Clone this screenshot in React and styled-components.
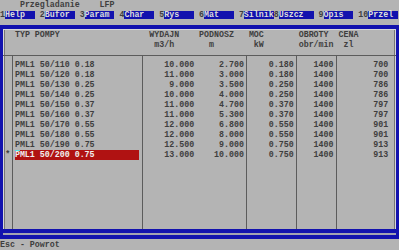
import styled, { createGlobalStyle } from "styled-components";

const GlobalStyle = createGlobalStyle`
  html, body {
    margin: 0;
    padding: 0;
    background: #b4b4b4;
  }
  body {
    overflow: hidden;
  }
`;

const Screen = styled.div`
  width: 399px;
  height: 250px;
  background: #b4b4b4;
  color: #3e3e3e;
  font-family: "Liberation Mono", "DejaVu Sans Mono", monospace;
  font-size: 8.3125px;
  font-weight: bold;
  line-height: 10px;
  white-space: pre;
  overflow: hidden;
`;

const TitleBar = styled.div`
  height: 10px;
  padding-left: 4ch;
`;

const KeyBar = styled.div`
  display: flex;
  height: 10px;
`;

const Key = styled.div`
  display: flex;
  margin-right: ${(p) => p.$gap}ch;
`;

const KeyLabel = styled.span`
  width: ${(p) => p.$cols}ch;
  height: 10px;
  background: linear-gradient(to bottom, transparent 1px, #1212ae 1px, #1212ae 9px, transparent 9px);
  color: #dcdcdc;
`;

const Frame = styled.div`
  margin-top: 5px;
  height: 214px;
  box-sizing: border-box;
  padding: 4px 3px;
  background: #1212ae;
  display: flex;
  flex-direction: column;
`;

const Inner = styled.div`
  height: 200px;
  box-sizing: border-box;
  padding-top: 1px;
  background: #b4b4b4;
  box-shadow: inset 1px 1px 0 #d8d8d8, inset -1px 0 0 #d8d8d8, inset 2px 0 0 #767676,
    inset -2px 0 0 #767676;
`;

const Groove = styled.div`
  margin-top: 4px;
  height: 2px;
  background: #a2a2b2;
`;

const Table = styled.div`
  display: flex;
  height: 100%;
`;

const Col = styled.div`
  display: flex;
  flex-direction: column;
  width: ${(p) => p.$w};
  flex: ${(p) => (p.$grow ? 1 : "none")};
`;

const HeadCell = styled.div`
  height: 10px;
  padding-left: ${(p) => p.$at || 0}ch;
`;

const Body = styled.div`
  flex: 1;
  margin-top: 5px;
  padding-top: 5px;
  box-shadow: inset 0 1px 0 #5c5c5c${(p) => (p.$sep ? ", inset 1px 0 0 #5c5c5c" : "")};
`;

const Mark = styled.div`
  height: 10px;
  text-align: center;
`;

const Value = styled.div`
  height: 10px;
  width: ${(p) => p.$end}ch;
  text-align: right;
`;

const Name = styled.div`
  height: 10px;
  padding-left: 0.5ch;
`;

const Picked = styled.div`
  width: 25ch;
  height: 10px;
  margin-left: 0.5ch;
  background: #b01212;
  color: #f0f0f0;
`;

const Caret = styled.span`
  display: inline-block;
  width: 1ch;
  height: 10px;
  vertical-align: top;
  box-shadow: inset 0 1px 0 #4ee0e0;
`;

const Footer = styled.div`
  margin-top: 1px;
  height: 10px;
`;

const keys = [
  { n: "1", label: "Help", cols: 6, gap: 1 },
  { n: "2", label: "Bufor", cols: 6, gap: 1 },
  { n: "3", label: "Param", cols: 6, gap: 1 },
  { n: "4", label: "Char", cols: 6, gap: 1 },
  { n: "5", label: "Rys", cols: 6, gap: 1 },
  { n: "6", label: "Mat", cols: 6, gap: 1 },
  { n: "7", label: "Silnik", cols: 6, gap: 0 },
  { n: "8", label: "Uszcz", cols: 7, gap: 1 },
  { n: "9", label: "Opis", cols: 6, gap: 1 },
  { n: "10", label: "Przel", cols: 6, gap: 0 },
];

const pumps = [
  ["PML1 50/110 0.18", "10.000", "2.700", "0.180", "1400", "700"],
  ["PML1 50/120 0.18", "11.000", "3.000", "0.180", "1400", "700"],
  ["PML1 50/130 0.25", "9.000", "3.500", "0.250", "1400", "786"],
  ["PML1 50/140 0.25", "10.000", "4.000", "0.250", "1400", "786"],
  ["PML1 50/150 0.37", "11.000", "4.700", "0.370", "1400", "797"],
  ["PML1 50/160 0.37", "11.000", "5.300", "0.370", "1400", "797"],
  ["PML1 50/170 0.55", "12.000", "6.800", "0.550", "1400", "901"],
  ["PML1 50/180 0.55", "12.000", "8.000", "0.550", "1400", "901"],
  ["PML1 50/190 0.75", "12.500", "9.000", "0.750", "1400", "913"],
  ["PML1 50/200 0.75", "13.000", "10.000", "0.750", "1400", "913"],
];

const selected = 9;

// numeric columns: field index, width, separator, header offsets, value end
const numCols = [
  { i: 1, w: "10.5ch", sep: true, head: "WYDAJN", headAt: 1.5, unit: "m3/h", unitAt: 2.5, end: 10.5 },
  { i: 2, w: "10.5ch", sep: false, head: "PODNOSZ", headAt: 1, unit: "m", unitAt: 3, end: 10 },
  { i: 3, w: "10ch", sep: true, head: "MOC", headAt: 0.5, unit: "kW", unitAt: 1.5, end: 9.5 },
  { i: 4, w: "8ch", sep: true, head: "OBROTY", headAt: 0.5, unit: "obr/min", unitAt: 0.5, end: 7.5 },
  { i: 5, grow: true, sep: true, head: "CENA", headAt: 0.5, unit: "zl", unitAt: 1.5, end: 10.5 },
];

const App = () => {
  return (
    <>
      <GlobalStyle />
      <Screen>
        <TitleBar>Przegladanie    LFP</TitleBar>
        <KeyBar>
          {keys.map((k) => (
            <Key key={k.n} $gap={k.gap}>
              <span>{k.n}</span>
              <KeyLabel $cols={k.cols}>{k.label}</KeyLabel>
            </Key>
          ))}
        </KeyBar>
        <Frame>
          <Inner>
            <Table>
              <Col $w="calc(2.5ch - 3px)">
                <HeadCell />
                <HeadCell />
                <Body>
                  {pumps.map((p, r) => (
                    <Mark key={r}>{r === selected ? "*" : " "}</Mark>
                  ))}
                </Body>
              </Col>
              <Col $w="26ch">
                <HeadCell $at={0.5}>TYP POMPY</HeadCell>
                <HeadCell />
                <Body $sep>
                  {pumps.map((p, r) =>
                    r === selected ? (
                      <Picked key={r}>
                        <Caret>{p[0][0]}</Caret>
                        {p[0].slice(1)}
                      </Picked>
                    ) : (
                      <Name key={r}>{p[0]}</Name>
                    )
                  )}
                </Body>
              </Col>
              {numCols.map((c) => (
                <Col key={c.i} $w={c.w} $grow={c.grow}>
                  <HeadCell $at={c.headAt}>{c.head}</HeadCell>
                  <HeadCell $at={c.unitAt}>{c.unit}</HeadCell>
                  <Body $sep={c.sep}>
                    {pumps.map((p, r) => (
                      <Value key={r} $end={c.end}>
                        {p[c.i]}
                      </Value>
                    ))}
                  </Body>
                </Col>
              ))}
            </Table>
          </Inner>
          <Groove />
        </Frame>
        <Footer>Esc - Powrot</Footer>
      </Screen>
    </>
  );
};

export default App;
